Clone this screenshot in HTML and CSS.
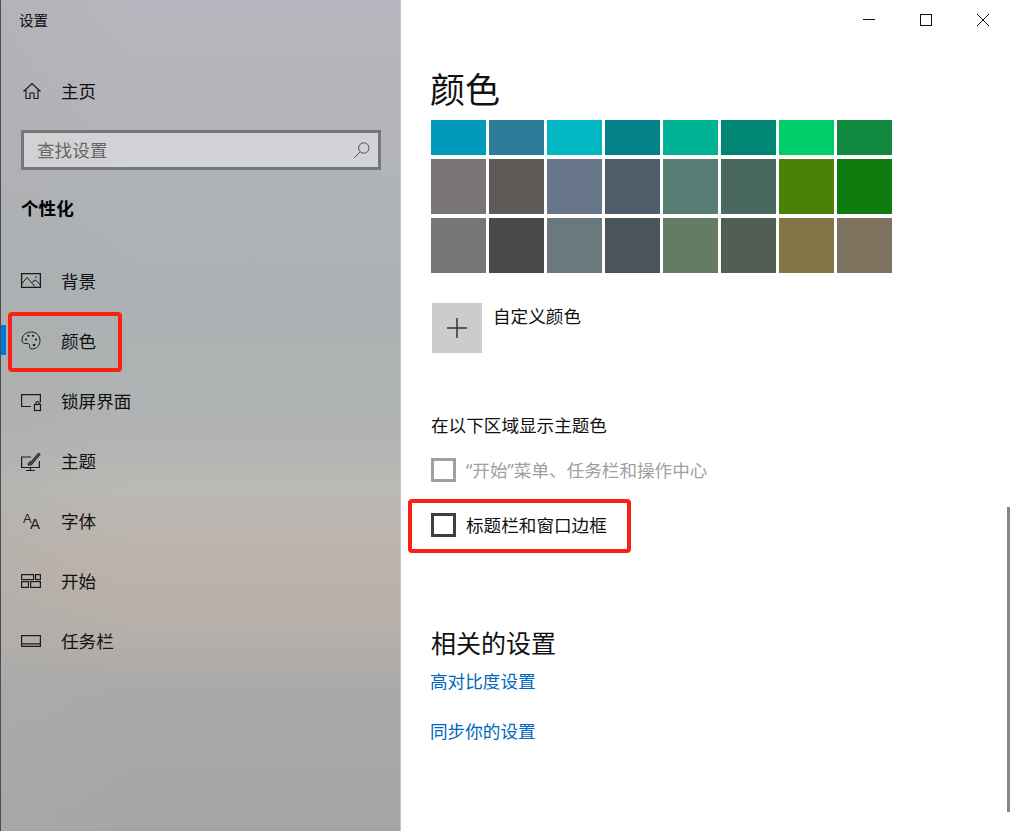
FILE: index.html
```html
<!DOCTYPE html>
<html lang="zh-CN">
<head>
<meta charset="utf-8">
<title>设置</title>
<link rel="stylesheet" href="styles.css">
</head>
<body>
<div class="window">
  <aside class="sidebar">
    <div class="app-title">设置</div>
    <div class="home nav-item">
      <svg class="icon icon-bold" viewBox="0 0 20 20"><path d="M2.500 10.500 11 2.500l8.500 8M5 8.500v9h4V12h4v5.500h4v-9"/></svg>
      <span>主页</span>
    </div>
    <div class="search">
      <span class="search-text">查找设置</span>
      <svg class="search-icon" viewBox="0 0 18 18"><circle cx="10.800" cy="7" r="5.200"/><path d="M7.200 10.800 1.200 16.800"/></svg>
    </div>
    <div class="section-title">个性化</div>
    <nav class="nav">
      <div class="nav-item">
        <svg class="icon" viewBox="0 0 20 20"><path class="frame" d="M.6 2.600h18.800v13.800H.6z"/><path d="M.5 13 6 6.500l8 9M10.500 11.500 14.500 9l5 5"/><circle cx="15" cy="6" r=".8"/></svg>
        <span>背景</span>
      </div>
      <div class="nav-item active">
        <svg class="icon" viewBox="0 0 20 20"><path d="M10.500 1C5 1 1 4.300 1 9c0 2.800 2 3.800 4 3.500 2-.3 3.700.2 3.500 2-.2 1.800.5 3.500 2.700 3.500 4.500 0 7.800-4 7.800-8.500C19 4.500 15.200 1 10.500 1z"/><circle cx="5" cy="8.500" r="1.100"/><circle cx="7.500" cy="4.800" r="1.100"/><circle cx="12" cy="4.800" r="1.100"/><circle cx="15" cy="8.500" r="1.100"/><circle cx="13" cy="14" r="1.300"/></svg>
        <span>颜色</span>
      </div>
      <div class="nav-item">
        <svg class="icon icon-bold" viewBox="0 0 20 20"><path d="M10 15.500H.6V3.600h18.800v8"/><rect x="13.500" y="13.500" width="6" height="6"/><path d="M15 13.500v-1.500a1.500 1.500 0 0 1 3 0v1.500"/></svg>
        <span>锁屏界面</span>
      </div>
      <div class="nav-item">
        <svg class="icon icon-bold" viewBox="0 0 20 20"><path d="M10 6H.6v10.500h17.800V10M9.500 16.500v3M5 19.500h9"/><path class="brush" d="M7 14c.2-2.500 1.500-3.500 3-3.300l7.500-8.700 1.800 1.500-7.500 8.800c-.3 1.300-2 2.200-4.800 1.700z"/></svg>
        <span>主题</span>
      </div>
      <div class="nav-item">
        <svg class="icon" viewBox="0 0 20 20"><text x="2" y="11.500" class="font-small">A</text><text x="9" y="18" class="font-large">A</text></svg>
        <span>字体</span>
      </div>
      <div class="nav-item">
        <svg class="icon icon-bold" viewBox="0 0 20 20"><rect x=".6" y="3.600" width="12" height="5"/><rect x="14.600" y="3.600" width="4.800" height="5"/><rect x=".6" y="10.600" width="6.800" height="5.800"/><rect x="9.600" y="10.600" width="9.800" height="5.800"/></svg>
        <span>开始</span>
      </div>
      <div class="nav-item">
        <svg class="icon icon-bold" viewBox="0 0 20 20"><path d="M.6 4.600h18.800v10.800H.6zM.6 12.800h18.800"/></svg>
        <span>任务栏</span>
      </div>
    </nav>
  </aside>

  <main class="content">
    <div class="titlebar">
      <button class="win-btn"><svg viewBox="0 0 12 12"><path d="M0 5.500h12"/></svg></button>
      <button class="win-btn"><svg viewBox="0 0 12 12"><rect x=".5" y=".5" width="11" height="11"/></svg></button>
      <button class="win-btn"><svg viewBox="0 0 12 12"><path d="M0 0l12 12M12 0 0 12"/></svg></button>
    </div>
    <h1 class="page-title">颜色</h1>
    <div class="swatches">
      <div class="sw s1"></div><div class="sw s2"></div><div class="sw s3"></div><div class="sw s4"></div><div class="sw s5"></div><div class="sw s6"></div><div class="sw s7"></div><div class="sw s8"></div>
      <div class="sw tall s9"></div><div class="sw tall s10"></div><div class="sw tall s11"></div><div class="sw tall s12"></div><div class="sw tall s13"></div><div class="sw tall s14"></div><div class="sw tall s15"></div><div class="sw tall s16"></div>
      <div class="sw tall s17"></div><div class="sw tall s18"></div><div class="sw tall s19"></div><div class="sw tall s20"></div><div class="sw tall s21"></div><div class="sw tall s22"></div><div class="sw tall s23"></div><div class="sw tall s24"></div>
    </div>
    <div class="custom">
      <div class="plus"><svg viewBox="0 0 20 20"><path d="M10 0v20M0 10h20"/></svg></div>
      <span class="custom-label">自定义颜色</span>
    </div>
    <div class="subhead">在以下区域显示主题色</div>
    <label class="check disabled"><span class="box"></span><span class="check-text"><span class="quote">“</span>开始<span class="quote">”</span>菜单、任务栏和操作中心</span></label>
    <label class="check second"><span class="box"></span><span class="check-text">标题栏和窗口边框</span></label>
    <h2 class="related">相关的设置</h2>
    <a class="link first">高对比度设置</a>
    <a class="link">同步你的设置</a>
    <div class="scrollbar"></div>
  </main>
</div>
<div class="mark mark-nav"></div>
<div class="mark mark-check"></div>
</body>
</html>
```
FILE: styles.css
```css
* { box-sizing: border-box; }
html, body { margin: 0; height: 100%; }
body {
  width: 1011px;
  height: 831px;
  overflow: hidden;
  position: relative;
  background: #fff;
  font-family: "Noto Sans CJK SC", "Noto Sans", sans-serif;
  font-size: 17.6px;
  line-height: 24px;
  color: #111;
}
.window { display: flex; height: 831px; }
.sidebar {
  width: 401px;
  flex: none;
  border-left: 1px solid #4d4d4f;
  border-right: 1px solid #c8c6c4;
  background:
    linear-gradient(90deg, rgba(172,172,172,.35) 0, rgba(172,172,172,0) 130px),
    linear-gradient(180deg, #b6b7be 0, #b2b4b9 130px, #acb1b3 300px, #b1b3b3 430px, #bab9b5 490px, #bdb2a9 570px, #b5afaa 635px, #a9a9a8 690px, #a5a5a5 831px);
  padding-left: 20px;
  position: relative;
}
.app-title { height: 40px; margin-left: -2px; font-size: 14.6px; line-height: 40px; }
.home { margin-top: 31px; height: 40px; }
.nav-item { display: flex; align-items: center; gap: 20px; }
.icon { width: 20px; height: 20px; flex: none; fill: none; stroke: #1c1c1c; stroke-width: 1; overflow: visible; }
.icon-bold { stroke-width: 1.2; }
.icon circle { fill: #1c1c1c; stroke: none; }
.frame { stroke-width: 1.3; }
.brush { fill: #4a4a4a; stroke-width: .8; }
.search {
  margin-top: 19px;
  width: 360px;
  height: 40px;
  border: 3px solid #76777b;
  background: rgba(255,255,255,.42);
  display: flex;
  align-items: center;
  justify-content: space-between;
  padding: 0 7px 1px 13px;
  color: #666;
}
.search-icon { width: 18px; height: 18px; fill: none; stroke: #555; stroke-width: 1; margin-top: 1px; }
.section-title { margin-top: 23px; height: 30px; line-height: 30px; font-weight: 700; color: #000; }
.nav { margin-top: 28px; margin-left: -20px; }
.nav .nav-item { height: 60px; padding-left: 20px; position: relative; }
.nav .active::before {
  content: "";
  position: absolute;
  left: 0;
  top: 14px;
  width: 5px;
  height: 30px;
  background: #0078d7;
}
.font-small { font: 13px "Liberation Sans", sans-serif; fill: #1c1c1c; stroke: none; }
.font-large { font: 15px "Liberation Sans", sans-serif; fill: #1c1c1c; stroke: none; }

.content { flex: 1; position: relative; padding-left: 30px; }
.titlebar { display: flex; justify-content: flex-end; height: 40px; }
.win-btn { width: 57px; height: 40px; padding: 0; border: 0; background: none; display: flex; align-items: center; justify-content: center; }
.win-btn svg { width: 12px; height: 12px; fill: none; stroke: #111; stroke-width: 1; }
.page-title { margin: 24px 0 0 -1px; height: 56px; font-size: 35px; line-height: 48px; font-weight: 400; color: #111; }
.swatches { display: grid; grid-template-columns: repeat(8, 55px); gap: 4px 3px; }
.sw { height: 35px; }
.sw.tall { height: 55px; }
.s1 { background: #0099bc; } .s2 { background: #2d7d9a; } .s3 { background: #00b7c3; } .s4 { background: #038387; }
.s5 { background: #00b294; } .s6 { background: #018574; } .s7 { background: #00cc6a; } .s8 { background: #10893e; }
.s9 { background: #7a7574; } .s10 { background: #5d5a58; } .s11 { background: #68768a; } .s12 { background: #515c6b; }
.s13 { background: #567c73; } .s14 { background: #486860; } .s15 { background: #498205; } .s16 { background: #107c10; }
.s17 { background: #767676; } .s18 { background: #4c4a48; } .s19 { background: #69797e; } .s20 { background: #4a5459; }
.s21 { background: #647c64; } .s22 { background: #525e54; } .s23 { background: #847545; } .s24 { background: #7e735f; }
.custom { display: flex; gap: 11px; margin: 30px 0 0 1px; align-items: flex-start; }
.plus { width: 50px; height: 50px; background: #ccc; display: flex; align-items: center; justify-content: center; }
.plus svg { width: 20px; height: 20px; fill: none; stroke: #333; stroke-width: 1.5; }
.custom-label { margin-top: 1px; }
.subhead { margin-top: 60px; }
.check { display: flex; align-items: center; gap: 10px; height: 24px; }
.check-text { margin-top: 0; }
.quote { font-family: "Noto Sans", sans-serif; }
.box { width: 25px; height: 24px; border: 3px solid #3f3f3f; background: #fff; flex: none; }
.disabled { margin-top: 21px; color: #a0a0a0; }
.disabled .box { border-color: #a0a0a0; }
.second { margin-top: 31px; }
.related { margin: 87px 0 0; font-size: 25px; line-height: 36px; font-weight: 400; }
.link { display: block; color: #0067c0; margin-left: -1px; }
.link.first { margin-top: 9px; margin-bottom: 26px; }
.scrollbar { position: absolute; left: 606px; top: 507px; width: 3px; height: 305px; background: #868686; }

.mark { position: absolute; border: 4px solid #fb2014; border-radius: 4px; }
.mark-nav { left: 8px; top: 312px; width: 114px; height: 60px; }
.mark-check { left: 408px; top: 499px; width: 223px; height: 54px; }
```
